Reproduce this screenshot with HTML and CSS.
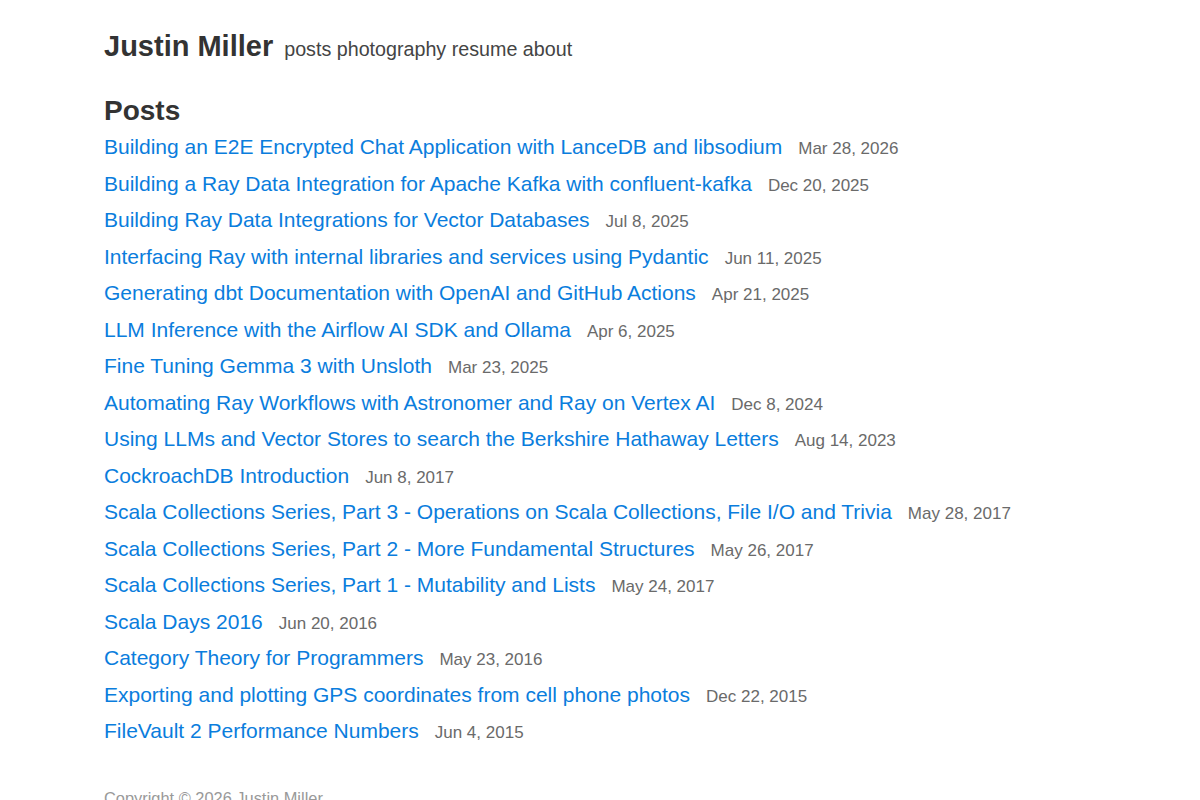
FILE: index.html
```html
<!DOCTYPE html>
<html lang="en">
<head>
    <meta charset="UTF-8">
    <meta name="viewport" content="width=device-width, initial-scale=1.0">
    <title>Justin Miller</title>
    <link rel="stylesheet" href="styles.css">
</head>
<body>
    <div class="wrapper">
        <header class="site-header">
            <a class="site-title" href="/">Justin Miller</a>
            <nav class="site-nav">
                <a href="/posts">posts</a>
                <a href="/photography">photography</a>
                <a href="/resume">resume</a>
                <a href="/about">about</a>
            </nav>
        </header>

        <main>
            <h1 class="page-title">Posts</h1>
            <ul class="post-list">
                <li><a href="#">Building an E2E Encrypted Chat Application with LanceDB and libsodium</a><span class="post-date">Mar 28, 2026</span></li>
                <li><a href="#">Building a Ray Data Integration for Apache Kafka with confluent-kafka</a><span class="post-date">Dec 20, 2025</span></li>
                <li><a href="#">Building Ray Data Integrations for Vector Databases</a><span class="post-date">Jul 8, 2025</span></li>
                <li><a href="#">Interfacing Ray with internal libraries and services using Pydantic</a><span class="post-date">Jun 11, 2025</span></li>
                <li><a href="#">Generating dbt Documentation with OpenAI and GitHub Actions</a><span class="post-date">Apr 21, 2025</span></li>
                <li><a href="#">LLM Inference with the Airflow AI SDK and Ollama</a><span class="post-date">Apr 6, 2025</span></li>
                <li><a href="#">Fine Tuning Gemma 3 with Unsloth</a><span class="post-date">Mar 23, 2025</span></li>
                <li><a href="#">Automating Ray Workflows with Astronomer and Ray on Vertex AI</a><span class="post-date">Dec 8, 2024</span></li>
                <li><a href="#">Using LLMs and Vector Stores to search the Berkshire Hathaway Letters</a><span class="post-date">Aug 14, 2023</span></li>
                <li><a href="#">CockroachDB Introduction</a><span class="post-date">Jun 8, 2017</span></li>
                <li><a href="#">Scala Collections Series, Part 3 - Operations on Scala Collections, File I/O and Trivia</a><span class="post-date">May 28, 2017</span></li>
                <li><a href="#">Scala Collections Series, Part 2 - More Fundamental Structures</a><span class="post-date">May 26, 2017</span></li>
                <li><a href="#">Scala Collections Series, Part 1 - Mutability and Lists</a><span class="post-date">May 24, 2017</span></li>
                <li><a href="#">Scala Days 2016</a><span class="post-date">Jun 20, 2016</span></li>
                <li><a href="#">Category Theory for Programmers</a><span class="post-date">May 23, 2016</span></li>
                <li><a href="#">Exporting and plotting GPS coordinates from cell phone photos</a><span class="post-date">Dec 22, 2015</span></li>
                <li><a href="#">FileVault 2 Performance Numbers</a><span class="post-date">Jun 4, 2015</span></li>
            </ul>
        </main>

        <footer class="site-footer">
            Copyright &copy; 2026 Justin Miller
        </footer>
    </div>
</body>
</html>
```

FILE: styles.css
```css
body {
    font-family: 'Liberation Sans', Arial, sans-serif;
    margin: 0;
    background: #ffffff;
    color: #333333;
}

a {
    text-decoration: none;
}

.wrapper {
    padding: 0 104px;
}

/* Header */
.site-header {
    display: flex;
    align-items: baseline;
    gap: 11px;
    padding-top: 30px;
}

.site-title {
    font-size: 29px;
    font-weight: bold;
    color: #333333;
}

.site-nav {
    font-size: 19.7px;
    color: #444444;
}

.site-nav a {
    color: #444444;
}

/* Post list */
.page-title {
    font-size: 28px;
    margin: 32px 0 0;
    color: #333333;
}

.post-list {
    list-style: none;
    margin: 2px 0 0;
    padding: 0;
}

.post-list li {
    font-size: 21px;
    line-height: 36.5px;
}

.post-list a {
    color: #0a7ddd;
}

.post-date {
    font-size: 17px;
    line-height: 1;
    color: #6a6a6a;
    margin-left: 16px;
}

.site-footer {
    margin-top: 39px;
    font-size: 16.4px;
    color: #999999;
}
```
